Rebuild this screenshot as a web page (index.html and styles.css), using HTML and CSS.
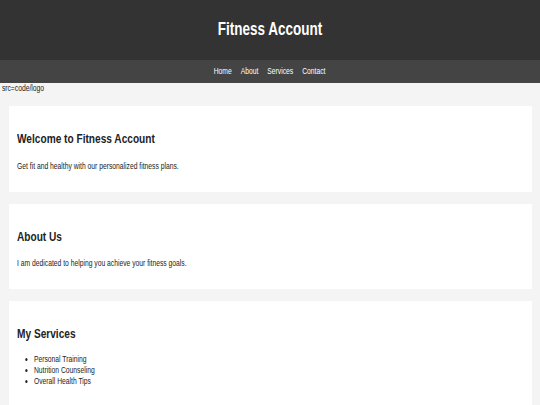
FILE: index.html
```html
<!DOCTYPE html>
<html lang="en">
<head>
    <meta charset="UTF-8">
    <meta name="viewport" content="width=device-width, initial-scale=1.0">
    <title>Fitness Account</title>
    <link rel="stylesheet" href="styles.css">
</head>
<body>
    <header class="site-header">
        <h1>Fitness Account</h1>
    </header>
    <nav class="site-nav">
        <div class="nav-links">
            <a href="#home">Home</a>
            <a href="#about">About</a>
            <a href="#services">Services</a>
            <a href="#contact">Contact</a>
        </div>
    </nav>
    <div class="logo-alt">src=code/logo</div>

    <section class="card" id="home">
        <h2>Welcome to Fitness Account</h2>
        <p>Get fit and healthy with our personalized fitness plans.</p>
    </section>

    <section class="card" id="about">
        <h2>About Us</h2>
        <p>I am dedicated to helping you achieve your fitness goals.</p>
    </section>

    <section class="card" id="services">
        <h2>My Services</h2>
        <ul>
            <li>Personal Training</li>
            <li>Nutrition Counseling</li>
            <li>Overall Health Tips</li>
        </ul>
    </section>
</body>
</html>
```

FILE: styles.css
```css
body {
    font-family: "Liberation Sans", Arial, sans-serif;
    font-size: 9px;
    line-height: 11px;
    margin: 0;
    background-color: #f4f4f4;
    color: #222;
}
/* text is drawn condensed to 75% width */
.site-header h1,
.nav-links {
    transform: scaleX(0.75);
}
.logo-alt,
.card h2,
.card p,
.card ul {
    transform: scaleX(0.75);
    transform-origin: left center;
}
.site-header {
    background-color: #333;
    color: #fff;
    text-align: center;
    padding: 19px 0 20px 0;
}
.site-header h1 {
    margin: 0;
    font-size: 18px;
    line-height: 21px;
}
.site-nav {
    background-color: #444;
    display: flex;
    justify-content: center;
    padding: 6px 0;
}
.nav-links {
    display: flex;
    gap: 12px;
}
.site-nav a {
    color: #fff;
    text-decoration: none;
}
.logo-alt {
    padding: 0 2.5px;
}
.card {
    background: #fff;
    margin: 12px 8.5px 0 8.5px;
    padding: 11px 8.5px;
}
.card h2 {
    margin: 14px 0 12px 0;
    font-size: 13.5px;
    line-height: 15.5px;
}
.card p {
    margin: 14px 0 9px 0;
}
.card ul {
    margin: 12px 0 9px 0;
    padding-left: 22.5px;
}
```
